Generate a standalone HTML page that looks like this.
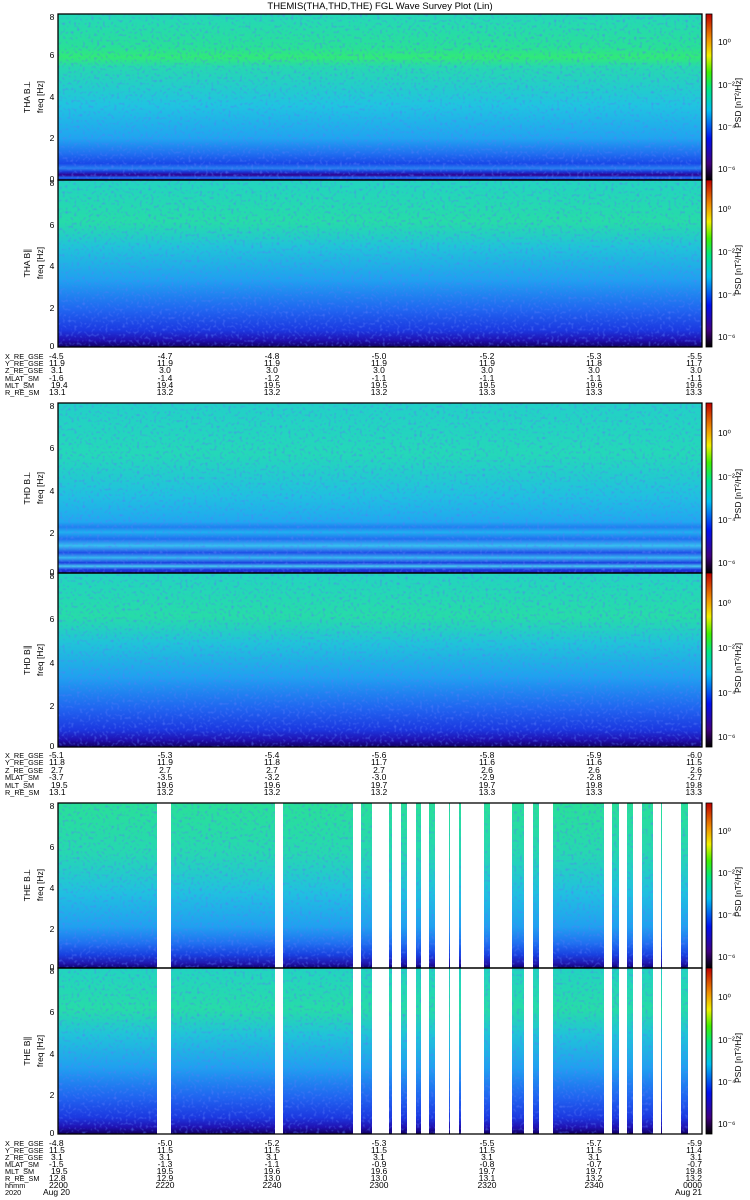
<!DOCTYPE html>
<html><head><meta charset="utf-8"><style>
html,body{margin:0;padding:0;background:#fff;}
svg{display:block;}
text{font-family:"Liberation Sans",sans-serif;fill:#000;}
.t{font-size:8.5px;}
.l{font-size:7.3px;}
</style></head><body>
<svg width="750" height="1200" viewBox="0 0 750 1200" xmlns="http://www.w3.org/2000/svg">
<defs>
<linearGradient id="perpA" x1="0" y1="0" x2="0" y2="1">
<stop offset="0" stop-color="#24d8b8"/><stop offset="0.2" stop-color="#28e098"/><stop offset="0.26" stop-color="#30ea78"/><stop offset="0.32" stop-color="#26d8b0"/><stop offset="0.55" stop-color="#20c4e0"/><stop offset="0.75" stop-color="#20a4f0"/><stop offset="0.84" stop-color="#2070f0"/><stop offset="0.9" stop-color="#1848e8"/><stop offset="0.93" stop-color="#2880f0"/><stop offset="0.95" stop-color="#1838d8"/><stop offset="0.97" stop-color="#300090"/><stop offset="0.985" stop-color="#2068f0"/><stop offset="1" stop-color="#1030d0"/>
</linearGradient>
<linearGradient id="par" x1="0" y1="0" x2="0" y2="1">
<stop offset="0" stop-color="#22d4c0"/><stop offset="0.25" stop-color="#26dca8"/><stop offset="0.4" stop-color="#20c4d8"/><stop offset="0.6" stop-color="#20a0f0"/><stop offset="0.78" stop-color="#2064f0"/><stop offset="0.9" stop-color="#1c38e0"/><stop offset="0.96" stop-color="#2010b0"/><stop offset="1" stop-color="#100060"/>
</linearGradient>
<linearGradient id="perpD" x1="0" y1="0" x2="0" y2="1">
<stop offset="0" stop-color="#22d0c8"/><stop offset="0.3" stop-color="#24d8b8"/><stop offset="0.55" stop-color="#20c0e0"/><stop offset="0.7" stop-color="#20a8f0"/><stop offset="0.73" stop-color="#2080f0"/><stop offset="0.76" stop-color="#20b0f0"/><stop offset="0.8" stop-color="#2070f0"/><stop offset="0.84" stop-color="#38c0f0"/><stop offset="0.88" stop-color="#2050e8"/><stop offset="0.91" stop-color="#38b8f0"/><stop offset="0.94" stop-color="#1c40e0"/><stop offset="0.96" stop-color="#48c8f0"/><stop offset="0.98" stop-color="#1c38e0"/><stop offset="1" stop-color="#2020c0"/>
</linearGradient>
<linearGradient id="perpE" x1="0" y1="0" x2="0" y2="1">
<stop offset="0" stop-color="#28e098"/><stop offset="0.3" stop-color="#26d8b0"/><stop offset="0.55" stop-color="#20c0e0"/><stop offset="0.75" stop-color="#20a0f0"/><stop offset="0.85" stop-color="#2070f0"/><stop offset="0.92" stop-color="#1840e0"/><stop offset="0.97" stop-color="#2018b0"/><stop offset="1" stop-color="#100070"/>
</linearGradient>
<linearGradient id="cb" x1="0" y1="1" x2="0" y2="0">
<stop offset="0" stop-color="#000000"/><stop offset="0.1" stop-color="#400080"/><stop offset="0.25" stop-color="#0010f0"/><stop offset="0.42" stop-color="#00c0f0"/><stop offset="0.55" stop-color="#00e880"/><stop offset="0.65" stop-color="#40f000"/><stop offset="0.75" stop-color="#f0f000"/><stop offset="0.85" stop-color="#f09000"/><stop offset="1" stop-color="#c00000"/>
</linearGradient>
<filter id="nz" x="0" y="0" width="1" height="1" filterUnits="objectBoundingBox">
<feTurbulence type="fractalNoise" baseFrequency="0.35" numOctaves="1" seed="3"/>
<feColorMatrix type="matrix" values="0 0 0 0 0.1  0 0 0 0 0.2  0 0 0 0 0.95  0 0 0 1.8 -0.95"/>
</filter>
</defs>

<text x="380" y="9" font-size="9.5" text-anchor="middle">THEMIS(THA,THD,THE) FGL Wave Survey Plot (Lin)</text>

<rect x="58" y="14" width="644" height="166" fill="url(#perpA)"/>
<rect x="58" y="180" width="644" height="167" fill="url(#par)"/>
<rect x="58" y="403" width="644" height="170" fill="url(#perpD)"/>
<rect x="58" y="573" width="644" height="174" fill="url(#par)"/>
<rect x="58" y="803" width="644" height="165" fill="url(#perpE)"/>
<rect x="58" y="968" width="644" height="166" fill="url(#par)"/>
<rect x="58" y="14" width="644" height="333" filter="url(#nz)"/>
<rect x="58" y="403" width="644" height="344" filter="url(#nz)"/>
<rect x="58" y="803" width="644" height="331" filter="url(#nz)"/>
<g fill="#fff">
<rect x="157" y="803" width="14" height="331"/><rect x="275" y="803" width="8" height="331"/>
<rect x="353" y="803" width="8" height="331"/><rect x="372" y="803" width="17" height="331"/>
<rect x="392" y="803" width="9" height="331"/><rect x="407" y="803" width="9" height="331"/>
<rect x="421" y="803" width="8" height="331"/><rect x="435" y="803" width="14" height="331"/>
<rect x="450" y="803" width="9" height="331"/><rect x="461" y="803" width="23" height="331"/>
<rect x="490" y="803" width="22" height="331"/><rect x="524" y="803" width="9" height="331"/>
<rect x="539" y="803" width="14" height="331"/><rect x="604" y="803" width="8" height="331"/>
<rect x="619" y="803" width="8" height="331"/><rect x="633" y="803" width="9" height="331"/>
<rect x="653" y="803" width="8" height="331"/><rect x="662" y="803" width="19" height="331"/>
<rect x="688" y="803" width="14" height="331"/>
</g>
<g fill="none" stroke="#000" stroke-width="1.3">
<rect x="58" y="14" width="644" height="166"/><rect x="58" y="180" width="644" height="167"/>
<rect x="58" y="403" width="644" height="170"/><rect x="58" y="573" width="644" height="174"/>
<rect x="58" y="803" width="644" height="165"/><rect x="58" y="968" width="644" height="166"/>
</g>
<g stroke="#000" stroke-width="0.8">
<rect x="706" y="14" width="6" height="166" fill="url(#cb)"/><rect x="706" y="180" width="6" height="167" fill="url(#cb)"/>
<rect x="706" y="403" width="6" height="170" fill="url(#cb)"/><rect x="706" y="573" width="6" height="174" fill="url(#cb)"/>
<rect x="706" y="803" width="6" height="165" fill="url(#cb)"/><rect x="706" y="968" width="6" height="166" fill="url(#cb)"/>
</g>
<g class="t" font-size="7.5">
<text x="718" y="45">10⁰</text><text x="718" y="88">10⁻²</text><text x="718" y="130">10⁻⁴</text><text x="718" y="172">10⁻⁶</text>
<text x="718" y="212">10⁰</text><text x="718" y="255">10⁻²</text><text x="718" y="298">10⁻⁴</text><text x="718" y="340">10⁻⁶</text>
<text x="718" y="436">10⁰</text><text x="718" y="480">10⁻²</text><text x="718" y="523">10⁻⁴</text><text x="718" y="566">10⁻⁶</text>
<text x="718" y="606">10⁰</text><text x="718" y="651">10⁻²</text><text x="718" y="696">10⁻⁴</text><text x="718" y="740">10⁻⁶</text>
<text x="718" y="834">10⁰</text><text x="718" y="876">10⁻²</text><text x="718" y="918">10⁻⁴</text><text x="718" y="960">10⁻⁶</text>
<text x="718" y="1000">10⁰</text><text x="718" y="1043">10⁻²</text><text x="718" y="1085">10⁻⁴</text><text x="718" y="1127">10⁻⁶</text>
</g>
<g class="t" font-size="8">
<text transform="translate(741,128) rotate(-90)">PSD [nT²/Hz]</text>
<text transform="translate(741,295) rotate(-90)">PSD [nT²/Hz]</text>
<text transform="translate(741,519) rotate(-90)">PSD [nT²/Hz]</text>
<text transform="translate(741,693) rotate(-90)">PSD [nT²/Hz]</text>
<text transform="translate(741,917) rotate(-90)">PSD [nT²/Hz]</text>
<text transform="translate(741,1083) rotate(-90)">PSD [nT²/Hz]</text>
</g>
<g class="t" font-size="8" text-anchor="middle">
<text transform="translate(30,97) rotate(-90)">THA B⊥</text><text transform="translate(43,97) rotate(-90)">freq [Hz]</text>
<text transform="translate(30,263) rotate(-90)">THA B∥</text><text transform="translate(43,263) rotate(-90)">freq [Hz]</text>
<text transform="translate(30,488) rotate(-90)">THD B⊥</text><text transform="translate(43,488) rotate(-90)">freq [Hz]</text>
<text transform="translate(30,660) rotate(-90)">THD B∥</text><text transform="translate(43,660) rotate(-90)">freq [Hz]</text>
<text transform="translate(30,885) rotate(-90)">THE B⊥</text><text transform="translate(43,885) rotate(-90)">freq [Hz]</text>
<text transform="translate(30,1051) rotate(-90)">THE B∥</text><text transform="translate(43,1051) rotate(-90)">freq [Hz]</text>
</g>
<g class="t" font-size="8" text-anchor="middle">
<text x="52" y="20">8</text><text x="52" y="58">6</text><text x="52" y="100">4</text><text x="52" y="141">2</text><text x="52" y="182">0</text>
<text x="52" y="186">8</text><text x="52" y="228">6</text><text x="52" y="269">4</text><text x="52" y="311">2</text><text x="52" y="349">0</text>
<text x="52" y="409">8</text><text x="52" y="451">6</text><text x="52" y="494">4</text><text x="52" y="536">2</text><text x="52" y="575">0</text>
<text x="52" y="579">8</text><text x="52" y="622">6</text><text x="52" y="666">4</text><text x="52" y="709">2</text><text x="52" y="749">0</text>
<text x="52" y="809">8</text><text x="52" y="850">6</text><text x="52" y="891">4</text><text x="52" y="932">2</text><text x="52" y="970">0</text>
<text x="52" y="974">8</text><text x="52" y="1015">6</text><text x="52" y="1057">4</text><text x="52" y="1098">2</text><text x="52" y="1136">0</text>
</g>

<g class="l">
<text x="5" y="359">X_RE_GSE</text><text x="5" y="366">Y_RE_GSE</text><text x="5" y="373">Z_RE_GSE</text><text x="5" y="381">MLAT_SM</text><text x="5" y="388">MLT_SM</text><text x="5" y="395">R_RE_SM</text>
</g>
<g class="t">
<text x="49" y="359">-4.5</text><text x="49" y="366">11.9</text><text x="51" y="373">3.1</text><text x="49" y="381">-1.6</text><text x="51" y="388">19.4</text><text x="49" y="395">13.1</text>
</g>
<g class="t" text-anchor="middle">
<text x="165" y="359">-4.7</text><text x="165" y="366">11.9</text><text x="165" y="373">3.0</text><text x="165" y="381">-1.4</text><text x="165" y="388">19.4</text><text x="165" y="395">13.2</text>
<text x="272" y="359">-4.8</text><text x="272" y="366">11.9</text><text x="272" y="373">3.0</text><text x="272" y="381">-1.2</text><text x="272" y="388">19.5</text><text x="272" y="395">13.2</text>
<text x="379" y="359">-5.0</text><text x="379" y="366">11.9</text><text x="379" y="373">3.0</text><text x="379" y="381">-1.1</text><text x="379" y="388">19.5</text><text x="379" y="395">13.2</text>
<text x="487" y="359">-5.2</text><text x="487" y="366">11.9</text><text x="487" y="373">3.0</text><text x="487" y="381">-1.1</text><text x="487" y="388">19.5</text><text x="487" y="395">13.3</text>
<text x="594" y="359">-5.3</text><text x="594" y="366">11.8</text><text x="594" y="373">3.0</text><text x="594" y="381">-1.1</text><text x="594" y="388">19.6</text><text x="594" y="395">13.3</text>
</g>
<g class="t" text-anchor="end">
<text x="702" y="359">-5.5</text><text x="702" y="366">11.7</text><text x="702" y="373">3.0</text><text x="702" y="381">-1.1</text><text x="702" y="388">19.6</text><text x="702" y="395">13.3</text>
</g>

<g class="l">
<text x="5" y="758">X_RE_GSE</text><text x="5" y="765">Y_RE_GSE</text><text x="5" y="773">Z_RE_GSE</text><text x="5" y="780">MLAT_SM</text><text x="5" y="788">MLT_SM</text><text x="5" y="795">R_RE_SM</text>
</g>
<g class="t">
<text x="49" y="758">-5.1</text><text x="49" y="765">11.8</text><text x="51" y="773">2.7</text><text x="49" y="780">-3.7</text><text x="51" y="788">19.5</text><text x="49" y="795">13.1</text>
</g>
<g class="t" text-anchor="middle">
<text x="165" y="758">-5.3</text><text x="165" y="765">11.9</text><text x="165" y="773">2.7</text><text x="165" y="780">-3.5</text><text x="165" y="788">19.6</text><text x="165" y="795">13.2</text>
<text x="272" y="758">-5.4</text><text x="272" y="765">11.8</text><text x="272" y="773">2.7</text><text x="272" y="780">-3.2</text><text x="272" y="788">19.6</text><text x="272" y="795">13.2</text>
<text x="379" y="758">-5.6</text><text x="379" y="765">11.7</text><text x="379" y="773">2.7</text><text x="379" y="780">-3.0</text><text x="379" y="788">19.7</text><text x="379" y="795">13.2</text>
<text x="487" y="758">-5.8</text><text x="487" y="765">11.6</text><text x="487" y="773">2.6</text><text x="487" y="780">-2.9</text><text x="487" y="788">19.7</text><text x="487" y="795">13.3</text>
<text x="594" y="758">-5.9</text><text x="594" y="765">11.6</text><text x="594" y="773">2.6</text><text x="594" y="780">-2.8</text><text x="594" y="788">19.8</text><text x="594" y="795">13.3</text>
</g>
<g class="t" text-anchor="end">
<text x="702" y="758">-6.0</text><text x="702" y="765">11.5</text><text x="702" y="773">2.6</text><text x="702" y="780">-2.7</text><text x="702" y="788">19.8</text><text x="702" y="795">13.3</text>
</g>

<g class="l">
<text x="5" y="1146">X_RE_GSE</text><text x="5" y="1153">Y_RE_GSE</text><text x="5" y="1160">Z_RE_GSE</text><text x="5" y="1167">MLAT_SM</text><text x="5" y="1174">MLT_SM</text><text x="5" y="1181">R_RE_SM</text><text x="5" y="1188">hhmm</text><text x="5" y="1195">2020</text>
</g>
<g class="t">
<text x="49" y="1146">-4.8</text><text x="49" y="1153">11.5</text><text x="51" y="1160">3.1</text><text x="49" y="1167">-1.5</text><text x="51" y="1174">19.5</text><text x="49" y="1181">12.8</text><text x="49" y="1188">2200</text><text x="43" y="1195">Aug 20</text>
</g>
<g class="t" text-anchor="middle">
<text x="165" y="1146">-5.0</text><text x="165" y="1153">11.5</text><text x="165" y="1160">3.1</text><text x="165" y="1167">-1.3</text><text x="165" y="1174">19.5</text><text x="165" y="1181">12.9</text><text x="165" y="1188">2220</text>
<text x="272" y="1146">-5.2</text><text x="272" y="1153">11.5</text><text x="272" y="1160">3.1</text><text x="272" y="1167">-1.1</text><text x="272" y="1174">19.6</text><text x="272" y="1181">13.0</text><text x="272" y="1188">2240</text>
<text x="379" y="1146">-5.3</text><text x="379" y="1153">11.5</text><text x="379" y="1160">3.1</text><text x="379" y="1167">-0.9</text><text x="379" y="1174">19.6</text><text x="379" y="1181">13.0</text><text x="379" y="1188">2300</text>
<text x="487" y="1146">-5.5</text><text x="487" y="1153">11.5</text><text x="487" y="1160">3.1</text><text x="487" y="1167">-0.8</text><text x="487" y="1174">19.7</text><text x="487" y="1181">13.1</text><text x="487" y="1188">2320</text>
<text x="594" y="1146">-5.7</text><text x="594" y="1153">11.5</text><text x="594" y="1160">3.1</text><text x="594" y="1167">-0.7</text><text x="594" y="1174">19.7</text><text x="594" y="1181">13.2</text><text x="594" y="1188">2340</text>
</g>
<g class="t" text-anchor="end">
<text x="702" y="1146">-5.9</text><text x="702" y="1153">11.4</text><text x="702" y="1160">3.1</text><text x="702" y="1167">-0.7</text><text x="702" y="1174">19.8</text><text x="702" y="1181">13.2</text><text x="702" y="1188">0000</text><text x="702" y="1195">Aug 21</text>
</g>
</svg>
</body></html>
